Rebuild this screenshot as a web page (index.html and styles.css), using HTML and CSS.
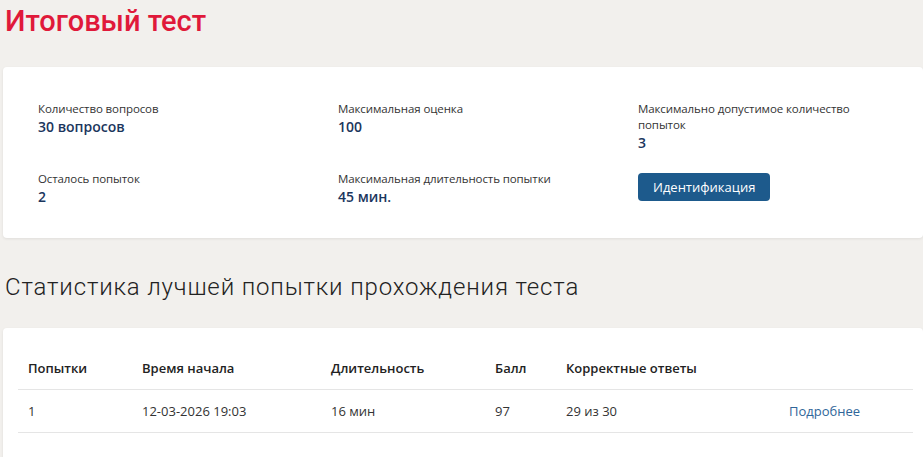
FILE: index.html
```html
<!DOCTYPE html>
<html lang="ru">
<head>
    <meta charset="UTF-8">
    <meta name="viewport" content="width=device-width, initial-scale=1.0">
    <title>Итоговый тест</title>
    <link rel="stylesheet" href="styles.css">
</head>
<body>

    <h1 class="page-title">Итоговый тест</h1>

    <!-- Параметры теста -->
    <div class="card info-card">
        <div class="info-grid">
            <div class="info-item">
                <div class="info-label">Количество вопросов</div>
                <div class="info-value">30 вопросов</div>
            </div>
            <div class="info-item">
                <div class="info-label">Максимальная оценка</div>
                <div class="info-value">100</div>
            </div>
            <div class="info-item">
                <div class="info-label">Максимально допустимое количество попыток</div>
                <div class="info-value">3</div>
            </div>
            <div class="info-item">
                <div class="info-label">Осталось попыток</div>
                <div class="info-value">2</div>
            </div>
            <div class="info-item">
                <div class="info-label">Максимальная длительность попытки</div>
                <div class="info-value">45 мин.</div>
            </div>
            <div class="info-item">
                <button class="btn-primary" type="button">Идентификация</button>
            </div>
        </div>
    </div>

    <h2 class="section-title">Статистика лучшей попытки прохождения теста</h2>

    <div class="card stats-card">
        <table class="stats-table">
            <thead>
                <tr>
                    <th class="col-try">Попытки</th>
                    <th class="col-start">Время начала</th>
                    <th class="col-duration">Длительность</th>
                    <th class="col-score">Балл</th>
                    <th class="col-correct">Корректные ответы</th>
                    <th></th>
                </tr>
            </thead>
            <tbody>
                <tr>
                    <td>1</td>
                    <td>12-03-2026 19:03</td>
                    <td>16 мин</td>
                    <td>97</td>
                    <td>29 из 30</td>
                    <td><a href="#" class="details-link">Подробнее</a></td>
                </tr>
            </tbody>
        </table>
    </div>

</body>
</html>
```

FILE: styles.css
```css
body {
    font-family: 'Open Sans', sans-serif;
    background-color: #f2f0ed;
    color: #333;
    margin: 0;
    padding: 0;
}

.page-title {
    font-family: 'Roboto', sans-serif;
    font-weight: 500;
    font-size: 29px;
    line-height: 36px;
    color: #e0193a;
    margin: 0;
    padding: 3px 5px 0;
}

.card {
    background-color: #ffffff;
    border-radius: 4px;
    box-shadow: 0 1px 3px rgba(0, 0, 0, 0.08);
    margin-left: 3px;
}

.info-card {
    margin-top: 28px;
    padding: 34px 35px 32px;
}

.info-grid {
    display: grid;
    grid-template-columns: 300px 300px 235px;
    row-gap: 19px;
}

.info-label {
    font-size: 11.5px;
    line-height: 16px;
    letter-spacing: -0.1px;
    color: #333;
}

.info-value {
    font-size: 14px;
    line-height: 19px;
    font-weight: 600;
    color: #1b365d;
}

.btn-primary {
    font-family: 'Open Sans', sans-serif;
    background-color: #1d5a8c;
    color: white;
    font-size: 13px;
    padding: 0 15px;
    height: 28px;
    border: none;
    border-radius: 4px;
    margin-top: 2px;
    cursor: pointer;
}

.section-title {
    font-family: 'Roboto', sans-serif;
    font-weight: 300;
    font-size: 24px;
    line-height: 30px;
    letter-spacing: 0.85px;
    color: #222;
    margin: 0;
    padding: 34px 5px 0;
}

.stats-card {
    margin-top: 26px;
    padding: 19px 10px 30px 15px;
}

.stats-table {
    width: 895px;
    border-collapse: collapse;
    font-size: 13px;
}

.stats-table th,
.stats-table td {
    text-align: left;
    padding: 12px 10px;
    line-height: 18px;
    border-bottom: 1px solid #e5e5e5;
}

.stats-table th {
    font-weight: 600;
    color: #222;
}

.col-try { width: 94px; }
.col-start { width: 169px; }
.col-duration { width: 144px; }
.col-score { width: 51px; }
.col-correct { width: 203px; }

.details-link {
    color: #2f6699;
    text-decoration: none;
}
```
